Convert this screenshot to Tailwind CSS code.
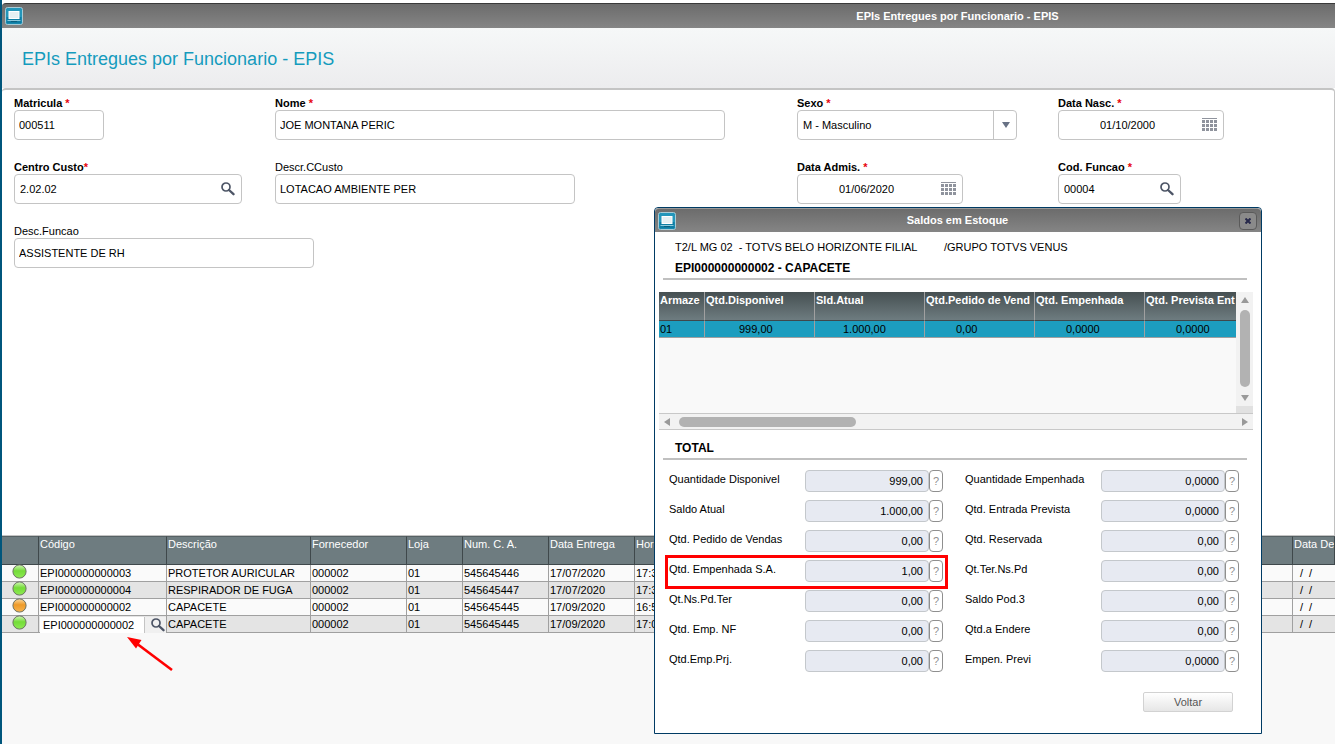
<!DOCTYPE html>
<html lang="pt-BR">

<head>
    <meta charset="UTF-8">
    <title>EPIs Entregues por Funcionario - EPIS</title>
    <script src="https://cdn.jsdelivr.net/npm/@tailwindcss/browser@4"></script>
</head>

<body class="font-['Liberation_Sans',Arial,sans-serif] text-[11px] text-black bg-white">
    <!-- icons -->
    <svg class="absolute w-0 h-0">
        <defs>
            <symbol id="icon-app" viewBox="0 0 18 18">
                <rect x="0.5" y="0.5" width="17" height="17" rx="2" fill="#2496ba" stroke="#a9cbd6" />
                <rect x="1.500" y="10" width="15" height="6.500" fill="#0f7da3" />
                <rect x="4" y="4.500" width="10" height="7" fill="#e6eff2" stroke="#fff" />
                <path d="M2.500 13.500h13" stroke="#8ccadd" />
                <path d="M6 14.500h6" stroke="#0a5f80" />
            </symbol>
            <symbol id="icon-search" viewBox="0 0 14 14">
                <circle cx="5" cy="5" r="4" fill="none" stroke="#4d5566" stroke-width="1.700" />
                <path d="M8 8L12.500 12.200" stroke="#4d5566" stroke-width="2.300" stroke-linecap="round" />
            </symbol>
            <symbol id="icon-calendar" viewBox="0 0 15 14">
                <path d="M0 0.500h15" stroke="#8f939d" />
                <path d="M0 3.500h15M0 7.500h15M0 11.500h15" stroke="#8f939d" stroke-width="3" stroke-dasharray="3 1" />
            </symbol>
            <linearGradient id="green" x1="0" y1="0" x2="0" y2="1">
                <stop offset="0" stop-color="#d3f7b8" />
                <stop offset="0.450" stop-color="#74dc38" />
                <stop offset="1" stop-color="#8fea55" />
            </linearGradient>
            <linearGradient id="orange" x1="0" y1="0" x2="0" y2="1">
                <stop offset="0" stop-color="#fad9a0" />
                <stop offset="0.450" stop-color="#ee9a28" />
                <stop offset="1" stop-color="#f7b550" />
            </linearGradient>
        </defs>
    </svg>

    <div class="relative h-screen min-h-[744px] flex flex-col overflow-hidden border-l-2 border-[#00567c]">
        <!-- title bar -->
        <div class="mt-[3px] h-[25px] shrink-0 flex items-center pl-[3px] border-t border-[#3a3a3a] rounded-tl-sm bg-linear-to-b from-[#6c6c6c] to-[#858585]">
            <svg class="w-[18px] h-[18px]"><use href="#icon-app" /></svg>
            <p class="flex-1 pl-[557px] text-center font-bold text-white">EPIs Entregues por Funcionario - EPIS</p>
        </div>
        <!-- header -->
        <div class="h-[60px] shrink-0 flex items-center pl-5 pt-[2px] bg-linear-to-b from-[#f6f8f8] to-[#ececee]">
            <h1 class="text-[18px] text-[#159bbd]">EPIs Entregues por Funcionario - EPIS</h1>
        </div>

        <!-- form -->
        <form class="flex-1 border-t-2 border-r border-b border-[#c4c4c4] rounded-t-sm bg-white pl-3 pt-[7px]">
            <div class="grid grid-cols-[minmax(0,261fr)_minmax(0,522fr)_minmax(0,261fr)_minmax(0,276fr)] gap-y-[21px]">
                <div>
                    <label for="matricula" class="block h-[13px] leading-3 font-bold">Matricula <span class="text-red-600">*</span></label>
                    <input id="matricula" value="000511" class="block w-[90px] h-[30px] pl-1 border border-[#c4c4c4] rounded-sm">
                </div>
                <div>
                    <label for="nome" class="block h-[13px] leading-3 font-bold">Nome <span class="text-red-600">*</span></label>
                    <input id="nome" value="JOE MONTANA PERIC" class="block w-[450px] h-[30px] pl-1 border border-[#c4c4c4] rounded-sm">
                </div>
                <div>
                    <label for="sexo" class="block h-[13px] leading-3 font-bold">Sexo <span class="text-red-600">*</span></label>
                    <div class="relative w-[220px]">
                        <select id="sexo" class="block appearance-none w-full h-[30px] pl-[5px] border border-[#c4c4c4] rounded-sm">
                            <option>M - Masculino</option>
                        </select>
                        <span class="absolute right-0 inset-y-px w-6 border-l border-[#c4c4c4] flex items-center justify-center pointer-events-none">
                            <svg class="w-2 h-[6px]" viewBox="0 0 8 6"><path d="M0 0h8L4 6z" fill="#687285" /></svg>
                        </span>
                    </div>
                </div>
                <div>
                    <label for="nasc" class="block h-[13px] leading-3 font-bold">Data Nasc. <span class="text-red-600">*</span></label>
                    <div class="flex items-center w-[166px] h-[30px] pl-[41px] pr-[6px] border border-[#c4c4c4] rounded-sm">
                        <input id="nasc" value="01/10/2000" class="flex-1 min-w-0">
                        <button type="button" aria-label="Data Nasc."><svg class="w-[15px] h-[14px]"><use href="#icon-calendar" /></svg></button>
                    </div>
                </div>

                <div>
                    <label for="custo" class="block h-[13px] leading-3 font-bold">Centro Custo<span class="text-red-600">*</span></label>
                    <div class="flex items-center w-[228px] h-[30px] pl-[5px] pr-[6px] border border-[#c4c4c4] rounded-sm">
                        <input id="custo" value="2.02.02" class="flex-1 min-w-0">
                        <button type="button" aria-label="Centro Custo"><svg class="w-[14px] h-[14px]"><use href="#icon-search" /></svg></button>
                    </div>
                </div>
                <div>
                    <label for="descusto" class="block h-[13px] leading-3">Descr.CCusto</label>
                    <input id="descusto" value="LOTACAO AMBIENTE PER" class="block w-[300px] h-[30px] pl-1 border border-[#c4c4c4] rounded-sm">
                </div>
                <div>
                    <label for="admis" class="block h-[13px] leading-3 font-bold">Data Admis. <span class="text-red-600">*</span></label>
                    <div class="flex items-center w-[166px] h-[30px] pl-[41px] pr-[6px] border border-[#c4c4c4] rounded-sm">
                        <input id="admis" value="01/06/2020" class="flex-1 min-w-0">
                        <button type="button" aria-label="Data Admis."><svg class="w-[15px] h-[14px]"><use href="#icon-calendar" /></svg></button>
                    </div>
                </div>
                <div>
                    <label for="funcao" class="block h-[13px] leading-3 font-bold">Cod. Funcao <span class="text-red-600">*</span></label>
                    <div class="flex items-center w-[123px] h-[30px] pl-[5px] pr-[6px] border border-[#c4c4c4] rounded-sm">
                        <input id="funcao" value="00004" class="flex-1 min-w-0">
                        <button type="button" aria-label="Cod. Funcao"><svg class="w-[14px] h-[14px]"><use href="#icon-search" /></svg></button>
                    </div>
                </div>

                <div>
                    <label for="desfuncao" class="block h-[13px] leading-3">Desc.Funcao</label>
                    <input id="desfuncao" value="ASSISTENTE DE RH" class="block w-[300px] h-[30px] pl-1 border border-[#c4c4c4] rounded-sm">
                </div>
            </div>
        </form>

        <!-- items -->
        <div class="relative h-[208px] shrink-0 bg-[#f8f8f8]">
            <table class="w-full table-fixed border-separate border-spacing-0">
                <colgroup>
                    <col class="w-[37px]">
                    <col class="w-[128px]">
                    <col class="w-[144px]">
                    <col class="w-[96px]">
                    <col class="w-[56px]">
                    <col class="w-[86px]">
                    <col class="w-[86px]">
                    <col>
                    <col class="w-[42px]">
                </colgroup>
                <thead id="itemsHead"></thead>
                <tbody id="items"></tbody>
            </table>
            <svg class="absolute left-[124px] top-[98px] w-[50px] h-[40px]" viewBox="0 0 50 40">
                <path d="M46 36L12 10.500" stroke="#f00" stroke-width="2.600" />
                <path d="M1 3L15.500 6L10 14.500z" fill="#f00" />
            </svg>
        </div>

        <!-- dialog -->
        <div role="dialog" aria-label="Saldos em Estoque" class="absolute left-[652px] top-[207px] w-[608px] bg-white border border-[#003b64] rounded-t-sm">
            <div class="h-6 flex items-center pl-[3px] pr-1 border-t border-[#999] rounded-t-sm bg-linear-to-b from-[#6c6c6c] to-[#858585]">
                <svg class="w-[18px] h-[18px]"><use href="#icon-app" /></svg>
                <p class="flex-1 text-center font-bold text-white">Saldos em Estoque</p>
                <button type="button" aria-label="Fechar" class="w-[18px] h-[18px] flex items-center justify-center rounded-sm border border-[#5a5a5a] bg-[#8a8a8a]">
                    <svg class="w-[6px] h-[6px]" viewBox="0 0 6 6"><path d="M0.500 0.500L5.500 5.500M5.500 0.500L0.500 5.500" stroke="#26284a" stroke-width="2" /></svg>
                </button>
            </div>
            <div class="pl-1 pr-2 pb-[21px]">
                <div class="flex pl-4 pt-2 leading-[14px]">
                    <p class="w-[269px] whitespace-pre">T2/L MG 02  - TOTVS BELO HORIZONTE FILIAL</p>
                    <p>/GRUPO TOTVS VENUS</p>
                </div>
                <p class="pl-4 mt-[6px] text-[12px] leading-4 font-bold">EPI000000000002 - CAPACETE</p>
                <hr class="mt-[2px] ml-1 mr-[6px] border-t-2 border-[#c0c0c0]">

                <div class="mt-3 flex">
                    <div class="flex-1 h-[121px] overflow-hidden bg-[#f9f9f9]">
                        <table class="w-[596px] table-fixed border-separate border-spacing-0">
                            <colgroup>
                                <col class="w-[46px]">
                                <col class="w-[110px]">
                                <col class="w-[110px]">
                                <col class="w-[110px]">
                                <col class="w-[110px]">
                                <col class="w-[110px]">
                            </colgroup>
                            <thead id="stockHead"></thead>
                            <tbody>
                                <tr class="bg-[#1c9dbf]">
                                    <td class="h-[17px] leading-4 pl-px border-r border-b border-[#a0a0a0]">01</td>
                                    <td class="h-[17px] leading-4 pl-[34px] border-r border-b border-[#a0a0a0]">999,00</td>
                                    <td class="h-[17px] leading-4 pl-[28px] border-r border-b border-[#a0a0a0]">1.000,00</td>
                                    <td class="h-[17px] leading-4 pl-[31px] border-r border-b border-[#a0a0a0]">0,00</td>
                                    <td class="h-[17px] leading-4 pl-[31px] border-r border-b border-[#a0a0a0]">0,0000</td>
                                    <td class="h-[17px] leading-4 pl-[31px] border-r border-b border-[#a0a0a0]">0,0000</td>
                                </tr>
                            </tbody>
                        </table>
                    </div>
                    <!-- vertical scrollbar -->
                    <div class="w-[17px] flex flex-col items-center pt-[5px] bg-[#f2f2f2]">
                        <svg class="w-2 h-[6px]" viewBox="0 0 8 6"><path d="M0 6h8L4 0z" fill="#999" /></svg>
                        <div class="mt-[7px] w-[10px] h-[77px] rounded-full bg-[#b2b2b2]"></div>
                        <svg class="mt-2 w-2 h-[6px]" viewBox="0 0 8 6"><path d="M0 0h8L4 6z" fill="#999" /></svg>
                        <div class="mt-auto w-full h-[7px] bg-[#e1e1e1]"></div>
                    </div>
                </div>
                <!-- horizontal scrollbar -->
                <div class="h-[17px] flex items-center pl-[5px] pr-[5px] border-y border-[#c8c8c8] bg-[#f2f2f2]">
                    <svg class="w-[6px] h-2" viewBox="0 0 6 8"><path d="M6 0v8L0 4z" fill="#999" /></svg>
                    <div class="ml-[9px] w-[177px] h-[10px] rounded-full bg-[#b2b2b2]"></div>
                    <svg class="ml-auto w-[6px] h-2" viewBox="0 0 6 8"><path d="M0 0v8L6 4z" fill="#999" /></svg>
                </div>

                <h2 class="pl-4 mt-[10px] text-[12px] leading-4 font-bold">TOTAL</h2>
                <hr class="mt-[2px] ml-1 mr-[6px] border-t-2 border-[#c0c0c0]">

                <div id="totals" class="ml-[10px] mt-[10px] grid grid-cols-[296px_1fr] gap-y-2"></div>

                <div class="mt-5 flex justify-end pr-5">
                    <button type="button" class="w-[90px] h-5 rounded-xs border border-[#d2d2d2] bg-linear-to-b from-white to-[#e6e6e6] text-[#555]">Voltar</button>
                </div>
            </div>
        </div>
    </div>

    <script>
        var itemColumns = ["", "Código", "Descrição", "Fornecedor", "Loja", "Num. C. A.", "Data Entrega", "Hora", "Data Dev"]
        var items = [
            ["green", "EPI000000000003", "PROTETOR AURICULAR", "000002", "01", "545645446", "17/07/2020", "17:3", "/ /"],
            ["green", "EPI000000000004", "RESPIRADOR DE FUGA", "000002", "01", "545645447", "17/07/2020", "17:3", "/ /"],
            ["orange", "EPI000000000002", "CAPACETE", "000002", "01", "545645445", "17/09/2020", "16:5", "/ /"],
            ["green", "EPI000000000002", "CAPACETE", "000002", "01", "545645445", "17/09/2020", "17:0", "/ /"]
        ]
        var editing = 3

        var stockColumns = ["Armaze", "Qtd.Disponivel", "Sld.Atual", "Qtd.Pedido de Vend", "Qtd. Empenhada", "Qtd. Prevista Ent"]

        var totals = [
            ["Quantidade Disponivel", "999,00"], ["Quantidade Empenhada", "0,0000"],
            ["Saldo Atual", "1.000,00"], ["Qtd. Entrada Prevista", "0,0000"],
            ["Qtd. Pedido de Vendas", "0,00"], ["Qtd. Reservada", "0,00"],
            ["Qtd. Empenhada S.A.", "1,00"], ["Qt.Ter.Ns.Pd", "0,00"],
            ["Qt.Ns.Pd.Ter", "0,00"], ["Saldo Pod.3", "0,00"],
            ["Qtd. Emp. NF", "0,00"], ["Qtd.a Endere", "0,00"],
            ["Qtd.Emp.Prj.", "0,00"], ["Empen. Previ", "0,0000"]
        ]
        var highlighted = 6

        function renderItems() {
            let head = ""
            itemColumns.forEach(name => {
                head += `<th class="h-[29px] pl-px pt-0 align-top text-left font-normal leading-[14px] text-white whitespace-nowrap overflow-hidden bg-[#6e7c80] border-t border-r border-b border-t-[#566164] border-r-[#3f484b] border-b-[#3f484b]">${name}</th>`
            })
            document.getElementById("itemsHead").innerHTML = `<tr>${head}</tr>`

            let rows = ""
            items.forEach((item, i) => {
                let cells = `<td class="p-0 align-top border-r border-b border-[#a0a0a0]">
                    <svg class="block ml-[10px] -mt-px -mb-px w-[15px] h-[15px]" viewBox="0 0 15 15"><circle cx="7.500" cy="7.500" r="6.600" fill="url(#${item[0]})" stroke="#6d7466" /></svg>
                </td>`
                for (let c = 1; c < item.length; c++) {
                    if (i === editing && c === 1) {
                        cells += `<td class="relative p-0 border-r border-b border-[#a0a0a0]">
                            <div class="absolute left-px right-0 top-px h-4 flex bg-[#f0f0f0]">
                                <input aria-label="Código" value="${item[c]}" class="w-[105px] h-4 pl-[3px] bg-white border-r border-[#c4c4c4]">
                                <button type="button" aria-label="Pesquisar" class="pl-[6px]"><svg class="w-[14px] h-[14px]"><use href="#icon-search" /></svg></button>
                            </div>
                        </td>`
                    } else if (c === 8) {
                        cells += `<td class="pl-[7px] py-0 leading-4 whitespace-nowrap border-b border-[#a0a0a0]"><span class="flex gap-[6px]"><span>/</span><span>/</span></span></td>`
                    } else {
                        cells += `<td class="pl-px py-0 leading-4 whitespace-nowrap border-r border-b border-[#a0a0a0]">${item[c]}</td>`
                    }
                }
                rows += `<tr class="h-[17px] bg-[#fafafa] even:bg-[#e4e4e4]">${cells}</tr>`
            })
            document.getElementById("items").innerHTML = rows
        }

        function renderStock() {
            let head = ""
            stockColumns.forEach(name => {
                head += `<th class="h-[29px] pl-px pt-[1px] align-top text-left font-bold leading-[14px] text-white whitespace-nowrap overflow-hidden bg-linear-to-b from-[#465052] to-[#6e7c80] border-r border-b border-r-[#a0a0a0] border-b-[#3f484b]">${name}</th>`
            })
            document.getElementById("stockHead").innerHTML = `<tr>${head}</tr>`
        }

        function renderTotals() {
            let html = ""
            totals.forEach((total, i) => {
                html += `<div class="relative flex h-[22px]">
                    <label for="total${i}" class="w-[136px] pt-px leading-4">${total[0]}</label>
                    <input id="total${i}" value="${total[1]}" readonly class="w-[124px] pr-[5px] text-right bg-[#e7eaf2] border border-[#c4c8cc] rounded-sm">
                    <button type="button" aria-label="Ajuda ${total[0]}" class="w-[14px] border border-[#8f8f8f] rounded-sm bg-white text-[#8f8f8f]">?</button>
                    ${i === highlighted ? '<span class="absolute -left-1 -top-[5px] w-[283px] h-[34px] border-3 border-[#f00] pointer-events-none"></span>' : ''}
                </div>`
            })
            document.getElementById("totals").innerHTML = html
        }

        renderItems()
        renderStock()
        renderTotals()
    </script>
</body>

</html>
